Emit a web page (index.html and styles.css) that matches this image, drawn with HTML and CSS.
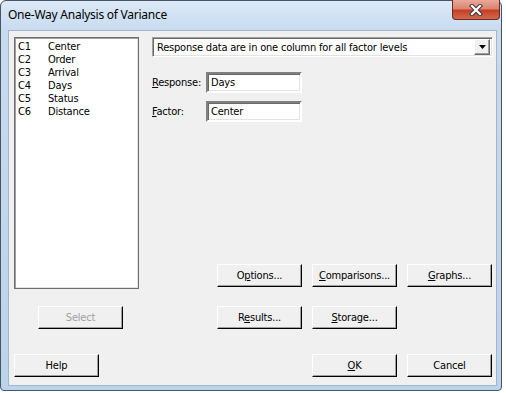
FILE: index.html
```html
<!DOCTYPE html>
<html lang="en">
<head>
    <meta charset="UTF-8">
    <title>One-Way Analysis of Variance</title>
    <link rel="stylesheet" href="styles.css">
</head>
<body>
<div class="window">
    <div class="titlebar">
        <span class="title">One-Way Analysis of Variance</span>
        <div class="close">
            <svg width="14" height="12" viewBox="0 0 14 12">
                <path d="M3 2 L11 10 M11 2 L3 10" stroke="#3b3b3b" stroke-width="4.2" stroke-linecap="square"/>
                <path d="M3 2 L11 10 M11 2 L3 10" stroke="#ffffff" stroke-width="2.2" stroke-linecap="square"/>
            </svg>
        </div>
    </div>
    <div class="client">
        <ul class="varlist">
            <li><span class="col">C1</span>Center</li>
            <li><span class="col">C2</span>Order</li>
            <li><span class="col">C3</span>Arrival</li>
            <li><span class="col">C4</span>Days</li>
            <li><span class="col">C5</span>Status</li>
            <li><span class="col">C6</span>Distance</li>
        </ul>
        <div class="main">
            <div class="combo">
                <span class="combo-text">Response data are in one column for all factor levels</span>
                <span class="combo-btn">
                    <svg width="7" height="4" viewBox="0 0 7 4"><path d="M0 0 H7 L3.5 4 Z" fill="#000"/></svg>
                </span>
            </div>
            <div class="field first">
                <label><u>R</u>esponse:</label>
                <span class="input">Days</span>
            </div>
            <div class="field">
                <label><u>F</u>actor:</label>
                <span class="input">Center</span>
            </div>
            <div class="btn-row">
                <button class="btn">O<u>p</u>tions...</button>
                <button class="btn"><u>C</u>omparisons...</button>
                <button class="btn"><u>G</u>raphs...</button>
            </div>
        </div>
        <button class="btn select" disabled>Select</button>
        <button class="btn results">R<u>e</u>sults...</button>
        <button class="btn storage"><u>S</u>torage...</button>
        <button class="btn help">Help</button>
        <button class="btn ok"><u>O</u>K</button>
        <button class="btn cancel">Cancel</button>
    </div>
</div>
</body>
</html>
```

FILE: styles.css
```css
*{
    margin: 0;
    padding: 0;
    list-style: none;
    box-sizing: border-box;
}
body{
    background-color: #ffffff;
    font-family: "DejaVu Sans Condensed", "Liberation Sans", sans-serif;
    font-size: 11px;
    letter-spacing: -0.2px;
    color: #000000;
}
.window{
    width: 502px;
    height: 391px;
    border: 1px solid #4a5563;
    border-radius: 6px 6px 4px 4px;
    background: linear-gradient(to bottom, #dce9f7 0px, #c7dbf0 30px, #bcd3ec 100%);
    display: flex;
    flex-direction: column;
}
.titlebar{
    height: 29px;
    display: flex;
    align-items: flex-start;
    padding-left: 7px;
}
.title{
    font-family: "Noto Sans", "Open Sans", sans-serif;
    font-size: 12px;
    letter-spacing: -0.25px;
    line-height: 16px;
    padding-top: 6px;
    color: #000000;
}
.close{
    margin-left: auto;
    margin-right: 1px;
    margin-top: -1px;
    width: 48px;
    height: 20px;
    border: 1px solid #6b2a22;
    border-top: none;
    border-radius: 0 0 4px 4px;
    background: linear-gradient(to bottom, #e9a99b 0%, #dc8571 45%, #c63f24 55%, #d26a4f 100%);
    display: flex;
    align-items: center;
    justify-content: center;
}

/* dialog client area */
.client{
    margin: 0 4px 4px 7px;
    height: 356px;
    background-color: #f0f0f0;
    border: 1px solid #a3b5ca;
    padding: 6px 0 0 5px;
    display: grid;
    grid-template-columns: 125px 58px 85px 85px 85px;
    grid-template-rows: 252px 17px 23px 25px 23px;
    column-gap: 10px;
}
.varlist{
    grid-column: 1;
    grid-row: 1;
    background-color: #ffffff;
    border: 1px solid #6e6e6e;
    box-shadow: inset 1px 1px #a0a0a0, inset -1px -1px #e3e3e3;
    padding: 2px 3px;
}
.varlist li{
    height: 13px;
    line-height: 13px;
    white-space: nowrap;
}
.varlist .col{
    display: inline-block;
    width: 30px;
}
.main{
    grid-column: 2 / span 4;
    grid-row: 1;
    display: flex;
    flex-direction: column;
}
.combo{
    margin-left: 3px;
    width: 341px;
    height: 20px;
    background-color: #ffffff;
    border: 1px solid;
    border-color: #a0a0a0 #ffffff #ffffff #a0a0a0;
    box-shadow: inset 1px 1px #696969, inset -1px -1px #e3e3e3;
    display: flex;
    align-items: center;
    padding: 0 2px 0 4px;
}
.combo-text{
    flex: 1;
    white-space: nowrap;
}
.combo-btn{
    width: 16px;
    height: 16px;
    background-color: #f0f0f0;
    border: 1px solid;
    border-color: #ffffff #696969 #696969 #ffffff;
    box-shadow: inset -1px -1px #a0a0a0;
    display: flex;
    align-items: center;
    justify-content: center;
}
.field{
    display: flex;
    align-items: center;
    margin-left: 3px;
    margin-top: 8px;
}
.field.first{
    margin-top: 15px;
}
.field label{
    width: 54px;
}
.input{
    width: 96px;
    height: 21px;
    line-height: 17px;
    background-color: #ffffff;
    border: 2px solid;
    border-color: #808080 #ffffff #ffffff #808080;
    box-shadow: inset 1px 1px #696969, inset -1px -1px #e3e3e3;
    padding: 0 3px;
}
.btn-row{
    margin-top: auto;
    margin-bottom: 2px;
    display: flex;
    justify-content: flex-end;
    gap: 10px;
}
.btn{
    width: 85px;
    height: 23px;
    font-family: inherit;
    font-size: 11px;
    letter-spacing: -0.2px;
    color: #000000;
    background-color: #f0f0f0;
    border: 1px solid;
    border-color: #ffffff #000000 #000000 #ffffff;
    box-shadow: inset -1px -1px #a0a0a0;
}
.btn:disabled{
    color: #a0a0a0;
}
.select{
    grid-column: 1;
    grid-row: 3;
    margin-left: 24px;
}
.results{
    grid-column: 3;
    grid-row: 3;
}
.storage{
    grid-column: 4;
    grid-row: 3;
}
.help{
    grid-column: 1;
    grid-row: 5;
}
.ok{
    grid-column: 4;
    grid-row: 5;
}
.cancel{
    grid-column: 5;
    grid-row: 5;
}
```
